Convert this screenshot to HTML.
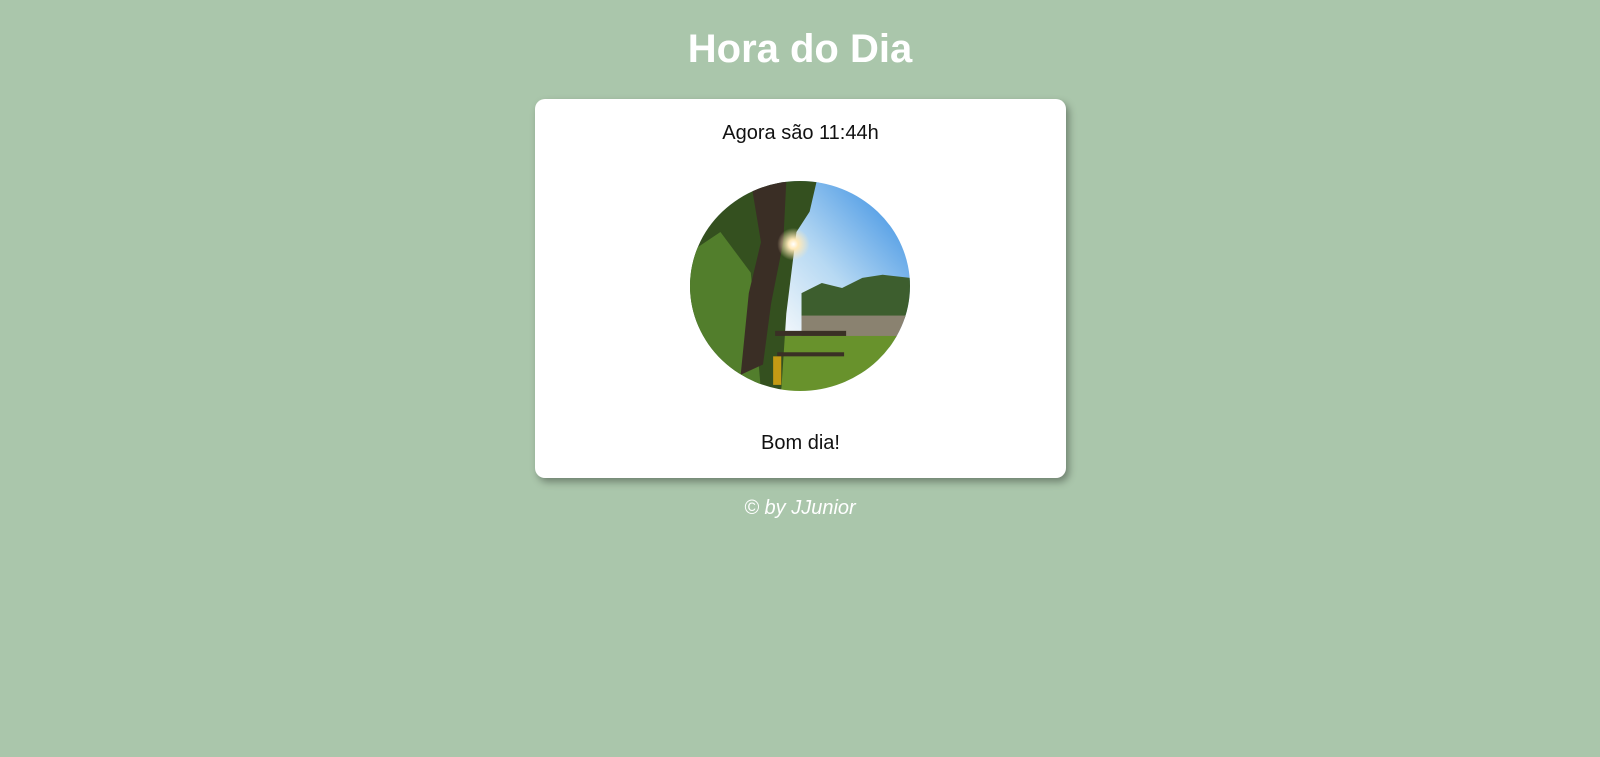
<!DOCTYPE html>
<html><head><meta charset="utf-8"><style>
html,body{margin:0;padding:0;}
body{width:1600px;height:757px;background:#aac6ab;font-family:"Liberation Sans",Arial,sans-serif;position:relative;overflow:hidden;}
h1{position:absolute;top:25px;left:0;width:1600px;text-align:center;margin:0;color:#fff;font-size:40px;font-weight:bold;line-height:48px;}
.card{position:absolute;left:535px;top:99px;width:531px;height:379px;background:#fff;border-radius:10px;box-shadow:3px 4px 8px rgba(0,0,0,0.35);}
.t{position:absolute;left:0;width:100%;text-align:center;font-size:20px;color:#111;line-height:23px;}
svg{position:absolute;left:155px;top:82px;}
.f{position:absolute;top:497px;left:0;width:1600px;text-align:center;color:#fff;font-style:italic;font-size:20px;line-height:23px;}
</style></head><body>
<h1>Hora do Dia</h1>
<div class="card">
<div class="t" style="top:23px">Agora são 11:44h</div>
<svg width="220" height="210" viewBox="0 0 217 206" preserveAspectRatio="none">
<defs>
<clipPath id="c"><ellipse cx="108.5" cy="103" rx="108.5" ry="103"/></clipPath>
<linearGradient id="sky" x1="1" y1="0" x2="0.3" y2="0.6"><stop offset="0" stop-color="#2b86e0"/><stop offset="0.6" stop-color="#b7d9f3"/><stop offset="1" stop-color="#f4f8fb"/></linearGradient>
<radialGradient id="sun" cx="0.5" cy="0.5" r="0.5"><stop offset="0" stop-color="#fff"/><stop offset="0.3" stop-color="#ffe9b8"/><stop offset="1" stop-color="#ffe9b8" stop-opacity="0"/></radialGradient>
</defs>
<g clip-path="url(#c)">
<rect width="217" height="206" fill="url(#sky)"/>
<path d="M110 110 L130 100 L150 105 L170 95 L190 92 L217 95 V135 H110Z" fill="#3d5e2e"/>
<rect x="110" y="132" width="110" height="22" fill="#8a8270"/>
<rect x="90" y="152" width="130" height="60" fill="#68922c"/>
<path d="M0 0 H125 L118 30 L105 50 L100 90 L95 130 L90 206 H0Z" fill="#34501f"/>
<path d="M0 70 L30 50 L60 90 L70 206 H0Z" fill="#527e2c"/>
<path d="M60 0 L95 0 L92 60 L80 120 L72 180 L50 190 L58 110 L70 60Z" fill="#3a2e25"/>
<rect x="84" y="147" width="70" height="5" fill="#3a3025"/>
<rect x="86" y="168" width="66" height="4" fill="#3a3025"/>
<rect x="82" y="172" width="8" height="28" fill="#c49a14"/>
<circle cx="102" cy="62" r="16" fill="url(#sun)"/>
</g>
</svg>
<div class="t" style="top:333px">Bom dia!</div>
</div>
<div class="f">© by JJunior</div>
</body></html>
